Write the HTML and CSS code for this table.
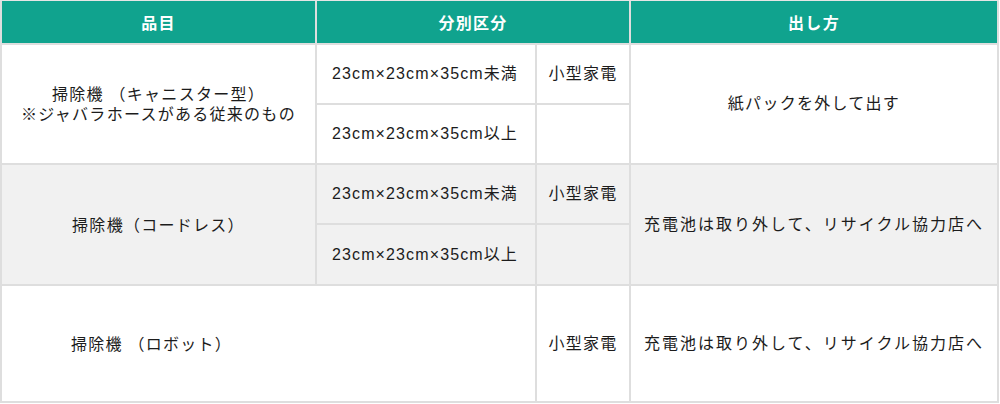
FILE: index.html
```html
<!DOCTYPE html>
<html lang="ja">
<head>
<meta charset="utf-8">
<title>掃除機の出し方</title>
<link rel="stylesheet" href="styles.css">
</head>
<body>
<table class="sort-table">
  <colgroup>
    <col class="col-item">
    <col class="col-size">
    <col class="col-cat">
    <col class="col-how">
  </colgroup>
  <thead>
    <tr class="head-row">
      <th class="first">品目</th>
      <th colspan="2">分別区分</th>
      <th>出し方</th>
    </tr>
  </thead>
  <tbody>
    <tr class="row">
      <td rowspan="2" class="first item">掃除機 （キャニスター型）<br>※ジャバラホースがある従来のもの</td>
      <td class="size">23cm×23cm×35cm未満</td>
      <td class="cat">小型家電</td>
      <td rowspan="2" class="how">紙パックを外して出す</td>
    </tr>
    <tr class="row">
      <td class="size">23cm×23cm×35cm以上</td>
      <td class="cat"></td>
    </tr>
    <tr class="row alt">
      <td rowspan="2" class="first item">掃除機（コードレス）</td>
      <td class="size">23cm×23cm×35cm未満</td>
      <td class="cat">小型家電</td>
      <td rowspan="2" class="how long">充電池は取り外して、リサイクル協力店へ</td>
    </tr>
    <tr class="row alt row-tall-b">
      <td class="size">23cm×23cm×35cm以上</td>
      <td class="cat"></td>
    </tr>
    <tr class="row row-big">
      <td class="first item open-right">掃除機 （ロボット）</td>
      <td class="size"></td>
      <td class="cat">小型家電</td>
      <td class="how long">充電池は取り外して、リサイクル協力店へ</td>
    </tr>
  </tbody>
</table>
</body>
</html>
```

FILE: styles.css
```css
html, body {
  margin: 0;
  padding: 0;
  background: #ffffff;
}

body {
  font-family: "Liberation Sans", "Noto Sans CJK JP", sans-serif;
  font-size: 16px;
  color: #1c1c1c;
}

.sort-table {
  width: 999px;
  table-layout: fixed;
  border-collapse: separate;
  border-spacing: 0;
  border-top: 1px solid #e6e6e6;
}

.col-item { width: 317px; }
.col-size { width: 220px; }
.col-cat { width: 94px; }
.col-how { width: 368px; }

th, td {
  border-right: 2px solid #dedede;
  border-bottom: 2px solid #dedede;
  text-align: center;
  vertical-align: middle;
  padding: 0 6px;
  letter-spacing: 0.08em;
  line-height: 20px;
  white-space: nowrap;
}

.first {
  border-left: 2px solid #dedede;
}

.head-row {
  height: 44px;
}

th {
  background: #10a38e;
  color: #ffffff;
  font-weight: bold;
  padding-top: 4px;
}

.row {
  height: 60px;
}

.row td {
  background: #ffffff;
}

.row.alt td {
  background: #f1f1f1;
}

.row-tall-b {
  height: 61px;
}

.row-big {
  height: 117px;
}

.item {
  padding-top: 2px;
}

.size {
  text-align: left;
  padding-left: 15px;
  letter-spacing: 0.07em;
}

.cat {
  padding: 0;
}

.how.long {
  letter-spacing: 0.125em;
  padding: 0;
}

.open-right {
  border-right: none;
  padding-right: 22px;
}
```
